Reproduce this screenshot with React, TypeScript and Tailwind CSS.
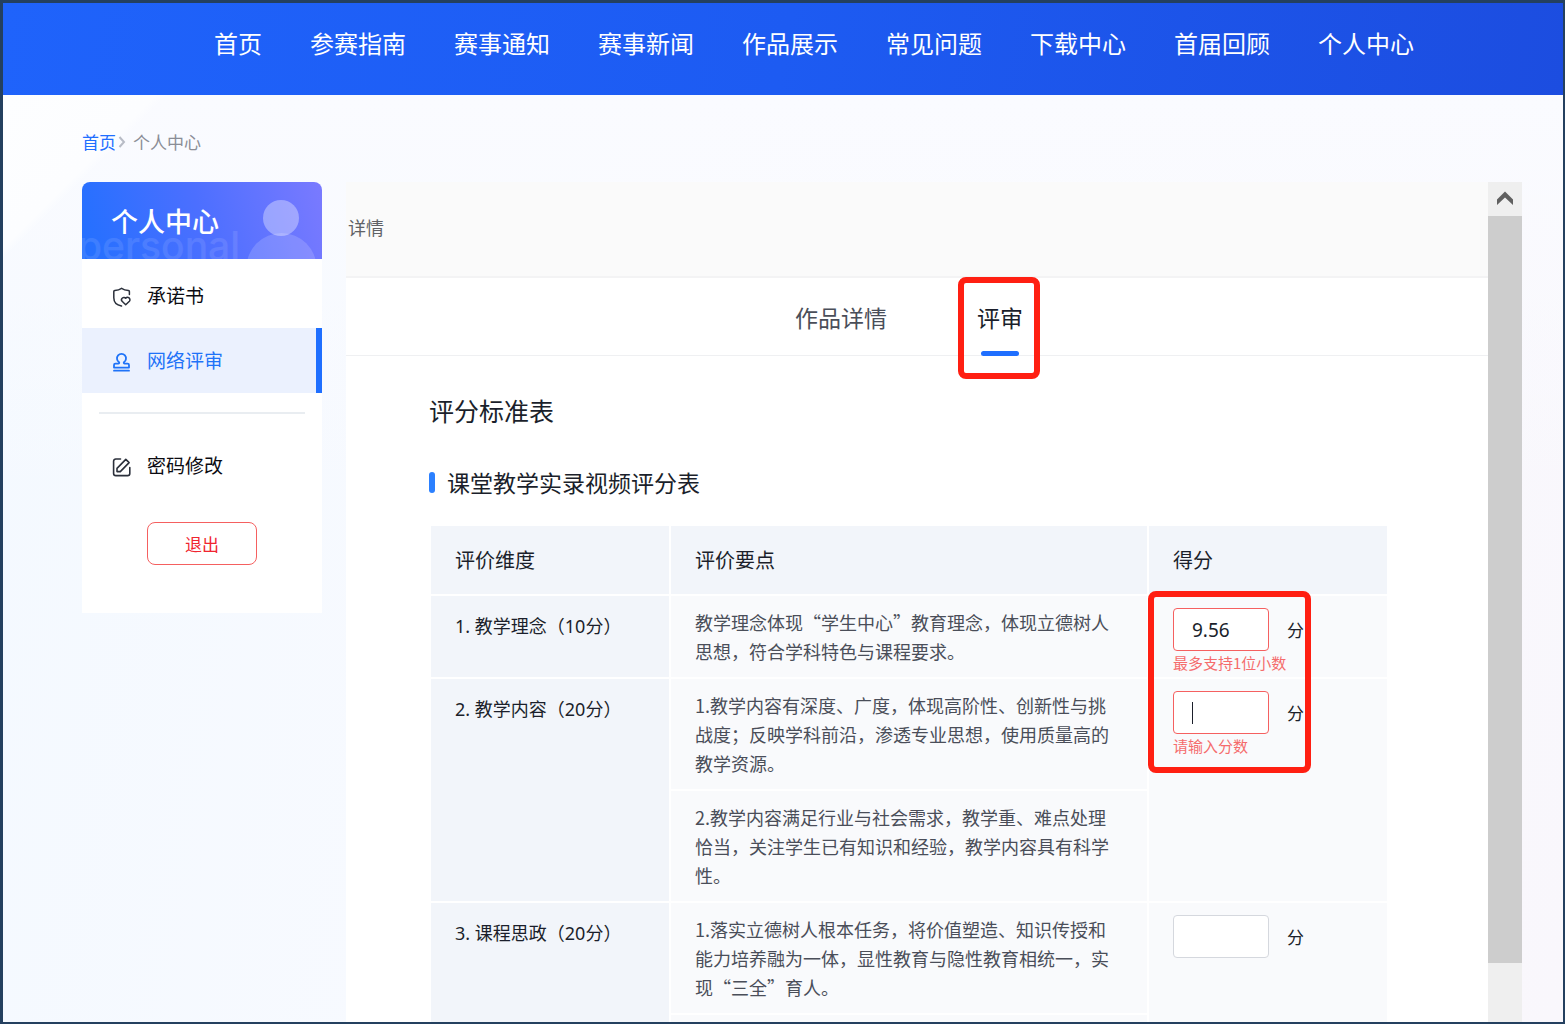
import { useState } from "react";
import type { ReactNode } from "react";
import clsx from "clsx";

const navItems = [
  "首页",
  "参赛指南",
  "赛事通知",
  "赛事新闻",
  "作品展示",
  "常见问题",
  "下载中心",
  "首届回顾",
  "个人中心",
];

function ShieldHeartIcon() {
  return (
    <svg width="20" height="20" viewBox="0 0 20 20" fill="none" stroke="#2b303b" strokeWidth="1.5" strokeLinecap="round" strokeLinejoin="round" className="mt-0.5 shrink-0">
      <path d="M18.4 7.600V4.600c0-.6-.4-.9-1-1C14.800 3.300 12.700 2.700 10.600 1.300 8.500 2.700 6.300 3.300 3.800 3.600c-.6.1-1 .4-1 1v6.100c0 4.300 3 7.400 7.700 8.300" />
      <path d="M14.700 17.800l-3.600-3.500a2.300 2.300 0 0 1 3.600-3 2.300 2.300 0 0 1 3.700 3z" />
    </svg>
  );
}

function StampIcon() {
  return (
    <svg width="20" height="20" viewBox="0 0 20 20" fill="none" stroke="currentColor" strokeWidth="1.8" strokeLinecap="round" strokeLinejoin="round" className="mt-0.5 shrink-0">
      <path d="M3 15.600V13c0-.9.500-1.400 1.400-1.400h2.900c.9 0 1.200-.7.800-1.400A4.500 4.500 0 1 1 12.900 10.200c-.4.7-.1 1.400.8 1.400h2.900c.9 0 1.400.5 1.400 1.400v2.600z" />
      <path d="M3 18.700h15" />
    </svg>
  );
}

function EditIcon() {
  return (
    <svg width="20" height="20" viewBox="0 0 20 20" fill="none" stroke="#2b303b" strokeWidth="1.6" strokeLinecap="round" strokeLinejoin="round" className="mt-0.5 shrink-0">
      <path d="M9.500 2H4.800A2.200 2.200 0 0 0 2.600 4.200v12.200a2.200 2.200 0 0 0 2.200 2.200h11.800a2.200 2.200 0 0 0 2.200-2.200V10.500" />
      <path d="M6 14.600v-3.200L14.800 2.400l3.300 3.200-8.800 9z" />
    </svg>
  );
}

function MenuItem({ icon, label, active }: { icon: ReactNode; label: string; active?: boolean }) {
  return (
    <a
      href="#"
      className={clsx(
        "flex h-[65px] items-center gap-4 pl-[29px] text-[19px]",
        active ? "border-r-[6px] border-[#1f6fff] bg-[#ebf1fe] text-[#1f73f8]" : "text-[#0c0c12]"
      )}
    >
      {icon}
      {label}
    </a>
  );
}

function Sidebar() {
  return (
    <aside className="w-60 shrink-0 rounded-t-lg bg-white pb-12">
      <div className="relative h-[77px] overflow-hidden rounded-t-lg bg-linear-[75deg] from-[#2270ff] via-[#4c6fff] to-[#7a7aff]">
        <span className="absolute -left-1 top-10 font-['Inter'] text-[39px] font-medium leading-[48px] text-white/10">
          personal
        </span>
        <svg width="80" height="77" viewBox="0 0 80 77" className="absolute right-0 top-0">
          <circle cx="39" cy="36" r="18" fill="#fff" fillOpacity="0.35" />
          <circle cx="39.500" cy="86" r="35" fill="#fff" fillOpacity="0.16" />
        </svg>
        <h2 className="relative pl-[29px] text-[27px] font-medium leading-[78px] text-white">个人中心</h2>
      </div>
      <nav className="pt-1">
        <MenuItem icon={<ShieldHeartIcon />} label="承诺书" />
        <MenuItem icon={<StampIcon />} label="网络评审" active />
        <hr className="mx-[17px] my-[19px] border-t-2 border-[#e9edf1]" />
        <MenuItem icon={<EditIcon />} label="密码修改" />
      </nav>
      <button className="mx-auto mt-6 block h-[43px] w-[110px] rounded-lg border border-[#f56060] text-[17px] text-[#f02530]">
        退出
      </button>
    </aside>
  );
}

function ScoreInput({ id, initial = "", error, caret }: { id: string; initial?: string; error?: string; caret?: boolean }) {
  const [value, setValue] = useState(initial);

  return (
    <div>
      <div className="flex items-center gap-[18px]">
        <div className="relative">
          <input
            id={id}
            value={value}
            onChange={(e) => setValue(e.target.value)}
            className={clsx(
              "block h-[43px] w-24 rounded border bg-white px-[18px] font-['Noto_Sans'] text-[19px] text-[#1b1f2b] outline-none",
              error ? "border-[#f56060]" : "border-[#d5d8de]"
            )}
          />
          {caret && <span className="absolute left-[19px] top-[11px] h-[22px] w-px bg-[#1b1f2b]" />}
        </div>
        <label htmlFor={id} className="text-[17px] text-[#1b1f2b]">
          分
        </label>
      </div>
      {error && <p className="text-[15px] leading-6 text-[#f56c6c]">{error}</p>}
    </div>
  );
}

function Dimension({ children, rowSpan }: { children: ReactNode; rowSpan?: number }) {
  return (
    <th
      scope="row"
      rowSpan={rowSpan}
      className="bg-[#f2f5fa] px-6 pb-[11px] pt-3 text-left align-top font-['Noto_Sans','Noto_Sans_CJK_SC',sans-serif] text-[18px] font-normal leading-9 text-[#1b1f2b]"
    >
      {children}
    </th>
  );
}

function Point({ children }: { children: ReactNode }) {
  return <td className="bg-[#f9fafc] px-6 pb-[11px] pt-3 align-top text-[18px] leading-[29px] text-[#4a4e59]">{children}</td>;
}

function ScoreTable() {
  return (
    <table className="mt-[26px] w-full table-fixed border-separate border-spacing-[2px]">
      <colgroup>
        <col className="w-1/4" />
        <col className="w-1/2" />
        <col className="w-1/4" />
      </colgroup>
      <thead>
        <tr className="h-[68px] bg-[#f2f5fa] text-left text-[20px] text-[#1b1f2b]">
          <th className="px-6 font-normal">评价维度</th>
          <th className="px-6 font-normal">评价要点</th>
          <th className="px-6 font-normal">得分</th>
        </tr>
      </thead>
      <tbody>
        <tr>
          <Dimension>1. 教学理念（10分）</Dimension>
          <Point>教学理念体现“学生中心”教育理念，体现立德树人思想，符合学科特色与课程要求。</Point>
          <td className="relative bg-[#f9fafc] px-6 pt-3 align-top">
            <ScoreInput id="score-1" initial="9.56" error="最多支持1位小数" />
            <div className="pointer-events-none absolute -left-px -top-[5px] z-10 h-[182px] w-[163px] rounded-lg border-[6px] border-[#ff1f12]" />
          </td>
        </tr>
        <tr>
          <Dimension rowSpan={2}>2. 教学内容（20分）</Dimension>
          <Point>1.教学内容有深度、广度，体现高阶性、创新性与挑战度；反映学科前沿，渗透专业思想，使用质量高的教学资源。</Point>
          <td rowSpan={2} className="bg-[#f9fafc] px-6 pt-3 align-top">
            <ScoreInput id="score-2" error="请输入分数" caret />
          </td>
        </tr>
        <tr>
          <Point>2.教学内容满足行业与社会需求，教学重、难点处理恰当，关注学生已有知识和经验，教学内容具有科学性。</Point>
        </tr>
        <tr>
          <Dimension rowSpan={2}>3. 课程思政（20分）</Dimension>
          <Point>1.落实立德树人根本任务，将价值塑造、知识传授和能力培养融为一体，显性教育与隐性教育相统一，实现“三全”育人。</Point>
          <td rowSpan={2} className="bg-[#f9fafc] px-6 pt-3 align-top">
            <ScoreInput id="score-3" />
          </td>
        </tr>
        <tr className="h-28">
          <td className="bg-[#f9fafc]" />
        </tr>
      </tbody>
    </table>
  );
}

function Scrollbar() {
  return (
    <div className="flex w-[34px] shrink-0 flex-col bg-[#efefef]">
      <button aria-label="向上滚动" className="flex h-[34px] shrink-0 items-center justify-center">
        <svg width="18" height="18" viewBox="0 0 18 18" fill="#606060">
          <path d="M1 9.500 9 1.500l8 8V15L9 7.500 1 15z" />
        </svg>
      </button>
      <div className="mb-[59px] flex-1 bg-[#cdcdcd]" />
    </div>
  );
}

export default function App() {
  return (
    <div className="flex h-screen flex-col overflow-hidden border-b-2 border-l-[3px] border-r-2 border-t-[3px] border-[#24405f] font-['Noto_Sans_CJK_SC',sans-serif]">
      <header className="h-[92px] shrink-0 bg-linear-[100deg] from-[#1f63fb] via-[#1d5bf2] to-[#1c4de0]">
        <nav className="flex justify-center gap-12 whitespace-nowrap pl-[62px] text-[24px] leading-[80px] text-white">
          {navItems.map((item) => (
            <a key={item} href="#">
              {item}
            </a>
          ))}
        </nav>
      </header>

      <main className="flex min-h-0 flex-1 flex-col bg-[linear-gradient(135deg,#fdfeff_0,#fcfdff_108px,transparent_116px),linear-gradient(180deg,#fafbff_0,transparent_400px),linear-gradient(100deg,#f4f9ff_0%,#f8faff_40%,#f9f7fc_100%)] pl-[79px] pr-[41px]">
        <div className="flex h-[87px] shrink-0 items-center pt-1.5 text-[17px]">
          <a href="#" className="text-[#1f6fff]">
            首页
          </a>
          <svg width="17" height="14" viewBox="0 0 17 14" fill="none" stroke="#b8bcc6" strokeWidth="2">
            <path d="M3.500 2l4.500 5-4.500 5" />
          </svg>
          <span className="text-[#8a8d96]">个人中心</span>
        </div>

        <div className="flex min-h-0 flex-1 items-start gap-6">
          <Sidebar />
          <div className="flex h-full min-w-0 flex-1">
            <section className="min-w-0 flex-1 overflow-hidden bg-white">
              <div className="h-24 border-b-2 border-[#f3f3f4] bg-[#fafafa] pl-0.5 text-[18px] leading-[90px] text-[#606266]">
                详情
              </div>
              <div className="flex h-[78px] justify-center gap-[90px] border-b border-[#eff0f2] pr-4 text-[23px] leading-[78px]">
                <button className="text-[#4a4e59]">作品详情</button>
                <button className="relative text-[#1b1f2b]">
                  评审
                  <span className="absolute inset-x-1 -bottom-px h-[5px] rounded-full bg-[#1f6fff]" />
                  <span className="pointer-events-none absolute -bottom-6 -left-[19px] -right-[17px] -top-px rounded-lg border-[6px] border-[#ff1f12]" />
                </button>
              </div>
              <div className="pl-[83px] pr-[99px] pt-[38px] text-[#1b1f2b]">
                <h1 className="text-[25px] leading-8">评分标准表</h1>
                <h2 className="mt-10 flex items-center gap-3 text-[23px] leading-8">
                  <span className="h-[21px] w-1.5 rounded-full bg-[#2b80ff]" />
                  课堂教学实录视频评分表
                </h2>
                <ScoreTable />
              </div>
            </section>
            <Scrollbar />
          </div>
        </div>
      </main>
    </div>
  );
}
